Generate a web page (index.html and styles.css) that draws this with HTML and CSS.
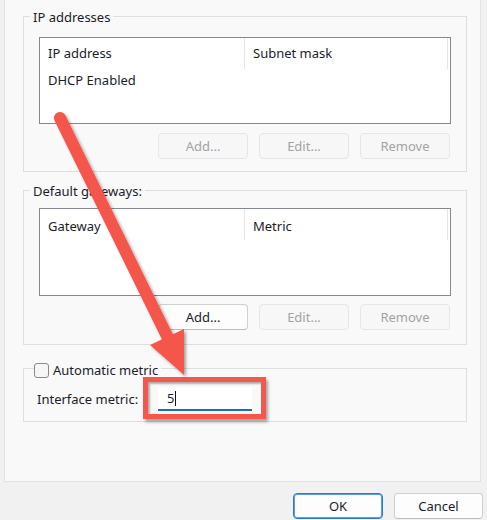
FILE: index.html
```html
<!DOCTYPE html>
<html>
<head>
<meta charset="utf-8">
<link rel="stylesheet" href="styles.css">
</head>
<body>
<div class="panel">
  <div class="group g1">
    <div class="legend">IP addresses</div>
    <div class="listbox lb1">
      <div class="lb-head">
        <div class="col c1">IP address</div>
        <div class="sep"></div>
        <div class="col c2">Subnet mask</div>
        <div class="sep"></div>
      </div>
      <div class="lb-row">DHCP Enabled</div>
    </div>
    <div class="btnrow">
      <button class="btn disabled">Add...</button>
      <button class="btn disabled">Edit...</button>
      <button class="btn disabled">Remove</button>
    </div>
  </div>

  <div class="group g2">
    <div class="legend">Default gateways:</div>
    <div class="listbox lb2">
      <div class="lb-head">
        <div class="col c1">Gateway</div>
        <div class="sep"></div>
        <div class="col c2">Metric</div>
        <div class="sep"></div>
      </div>
    </div>
    <div class="btnrow">
      <button class="btn">Add...</button>
      <button class="btn disabled">Edit...</button>
      <button class="btn disabled">Remove</button>
    </div>
  </div>

  <div class="group g3">
    <div class="legend check-legend">
      <span class="checkbox"></span>
      <span>Automatic metric</span>
    </div>
    <div class="metric-row">
      <span class="metric-label">Interface metric:</span>
      <div class="textbox">5<span class="caret"></span></div>
    </div>
  </div>
</div>

<div class="footer">
  <button class="btn dlg default">OK</button>
  <button class="btn dlg">Cancel</button>
</div>

<div class="highlight"></div>
<svg class="arrow" width="487" height="520" viewBox="0 0 487 520">
  <defs>
    <filter id="sh" x="-20%" y="-20%" width="140%" height="140%">
      <feDropShadow dx="2" dy="2" stdDeviation="1.5" flood-color="#000" flood-opacity="0.35"/>
    </filter>
  </defs>
  <g filter="url(#sh)">
    <line x1="60" y1="118" x2="168" y2="338" stroke="#f4574b" stroke-width="12" stroke-linecap="round"/>
    <polygon points="184,375 150,345 184,329" fill="#f4574b"/>
  </g>
</svg>
</body>
</html>
```

FILE: styles.css
```css
html, body {
  margin: 0;
  padding: 0;
}
body {
  position: relative;
  width: 487px;
  height: 520px;
  overflow: hidden;
  background: #f1f1f1;
  font-family: "Noto Sans", "Open Sans", sans-serif;
  font-size: 13px;
  color: #1c1c2a;
}
.panel {
  box-sizing: border-box;
  margin-left: 4px;
  width: 477px;
  height: 482px;
  background: #f9f9f9;
  border: 1px solid #e2e2e2;
  border-top: none;
  padding: 0 13px 0 18px;
  display: flex;
  flex-direction: column;
}
.group {
  border: 1px solid #dedede;
  display: flex;
  flex-direction: column;
}
.g1 { margin-top: 16px; padding-bottom: 12px; }
.g2 { margin-top: 18px; padding-bottom: 14px; }
.g3 { margin-top: 23px; padding-bottom: 10px; }

.legend {
  align-self: flex-start;
  margin: -9px 0 0 6px;
  padding: 0 3px;
  height: 18px;
  line-height: 18px;
  background: #f9f9f9;
}
.listbox {
  margin: 11px 15px 0 15px;
  background: #fff;
  border: 1px solid #858890;
  height: 85px;
}
.lb2 { margin-top: 8px; height: 86px; }
.lb-head {
  display: flex;
  height: 31px;
}
.lb2 .lb-head .col { padding-top: 3px; line-height: 28px; }
.col {
  line-height: 31px;
  padding-left: 8px;
}
.c1 { width: 196px; }
.c2 { width: 194px; }
.sep {
  width: 1px;
  background: #e6e6e6;
}
.lb-row {
  height: 22px;
  line-height: 22px;
  padding-left: 8px;
}
.btnrow {
  display: flex;
  justify-content: flex-end;
  gap: 11px;
  margin: 9px 16px 0 0;
}
.g2 .btnrow { margin-top: 8px; }
.btn {
  box-sizing: border-box;
  width: 90px;
  height: 26px;
  padding: 0;
  font: inherit;
  color: #1c1c2a;
  background: #fdfdfd;
  border: 1px solid #d0d0d0;
  border-bottom-color: #bdbdbd;
  border-radius: 4px;
}
.btn.disabled {
  color: #a3a3a3;
  background: #f7f7f7;
  border-color: #e6e6e6;
}
.check-legend {
  margin: -8px 0 0 10px;
  padding: 0 3px 0 0;
  display: flex;
  align-items: center;
  gap: 4px;
}
.checkbox {
  box-sizing: border-box;
  width: 15px;
  height: 15px;
  border: 1px solid #8a8a8a;
  border-radius: 3px;
  background: #f6f6f6;
}
.metric-row {
  display: flex;
  align-items: center;
  margin: 8px 0 0 13px;
}
.metric-label {
  width: 121px;
}
.textbox {
  box-sizing: border-box;
  width: 94px;
  height: 24px;
  background: #fff;
  border-bottom: 2px solid #1a6fc4;
  padding-left: 9px;
  line-height: 22px;
  display: flex;
  align-items: center;
}
.caret {
  width: 1px;
  height: 15px;
  background: #111;
  margin-left: 1px;
}
.footer {
  display: flex;
  justify-content: flex-end;
  gap: 11px;
  margin-top: 11px;
  padding-right: 4px;
}
.btn.dlg { width: 89px; }
.btn.default {
  width: 90px;
  border: 1px solid #2a7bd0;
  box-shadow: inset 0 0 0 1px #5b9ce0;
}
.highlight {
  position: absolute;
  left: 143px;
  top: 377px;
  width: 123px;
  height: 42px;
  box-sizing: border-box;
  border: 5px solid #f4574b;
  box-shadow: 2px 3px 3px rgba(0,0,0,0.35), inset 2px 2px 2px rgba(0,0,0,0.3);
}
.arrow {
  position: absolute;
  left: 0;
  top: 0;
  pointer-events: none;
}
```
